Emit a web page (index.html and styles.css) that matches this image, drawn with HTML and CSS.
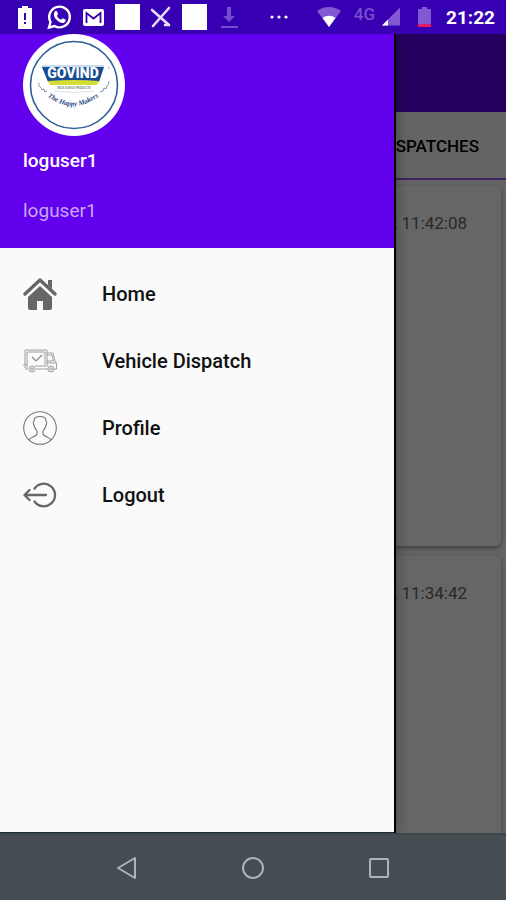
FILE: index.html
```html
<!DOCTYPE html>
<html lang="en">
<head>
    <meta charset="UTF-8" />
    <meta name="viewport" content="width=device-width, initial-scale=1" />
    <title>Dispatches</title>
    <link rel="stylesheet" href="styles.css">
</head>
<body>
    <div class="phone">
        <!-- Status bar -->
        <header class="status-bar">
            <div class="status-left">
                <svg viewBox="0 0 26 26"><path fill="#fff" d="M6 4h4V2h6v2h4v21H6z"/><path stroke="#3700b3" stroke-width="2" d="M13 9v7M13 18v2"/></svg>
                <svg viewBox="0 0 26 26"><path fill="none" stroke="#fff" stroke-width="2.4" d="M3 23.500l1.500-5.500a10.300 10.300 0 1 1 4 4z"/><path fill="#fff" d="M8.500 8c1-1.500 2-1.500 2.500-.5l1 2.300c.3.800-1.200 1.700-1 2.200 1 1.800 2.200 2.900 4 3.600.6.200 1.300-1.600 2-1.300l2.300 1.200c1 .5.300 2.200-.8 3-2 1.200-5 .2-7.500-2.200C8 13.500 7 10.500 8.500 8z"/></svg>
                <svg viewBox="0 0 26 26"><rect x="3" y="5" width="21" height="17" rx="2" fill="#fff"/><path fill="none" stroke="#3700b3" stroke-width="1.800" d="M6.500 19V9l7 5.500 7-5.500v10"/></svg>
                <svg viewBox="0 0 26 26"><path fill="#fff" d="M1 0h25v26H1z"/></svg>
                <svg viewBox="0 0 26 26"><path fill="none" stroke="#e6dcfa" stroke-width="2.600" stroke-linecap="round" d="M4 6l17 15M21 4L5 22M17 21h4"/></svg>
                <svg viewBox="0 0 26 26"><path fill="#fff" d="M0 0h25v26H0z"/></svg>
                <svg class="faded" viewBox="0 0 26 26"><path fill="#fff" d="M11 3h4v9h4l-6 6-6-6h4zM5 22h17v2H5z"/></svg>
            </div>
            <svg class="status-more" viewBox="0 0 18 6"><g fill="#fff"><circle cx="2" cy="3" r="1.600"/><circle cx="9" cy="3" r="1.600"/><circle cx="16" cy="3" r="1.600"/></g></svg>
            <div class="status-right">
                <svg class="icon-wifi" viewBox="0 0 24 22"><path fill="#8259d2" d="M0 5C7-.5 17-.5 24 5L12 21z"/><path fill="#fff" d="M5.500 12c4-3 9-3 13 0L12 21z"/></svg>
                <div class="network">
                    <span class="network-type">4G</span>
                    <svg class="icon-signal" viewBox="0 0 18 19"><path fill="#8259d2" d="M18 0v18H0z"/><path fill="#fff" d="M6 12v6H0z"/></svg>
                </div>
                <svg class="icon-battery" viewBox="0 0 20 22"><path fill="#8259d2" d="M5 3h4V1h5v2h4v18H5z"/><path fill="#e5195f" d="M5 18h13v3H5z"/></svg>
                <time class="clock">21:22</time>
            </div>
        </header>

        <main class="screen">
            <!-- Dispatch list -->
            <div class="page">
                <div class="app-bar"></div>
                <div class="tabs"><button class="tab" type="button">DISPATCHES</button></div>
                <div class="cards">
                    <article class="card"><time>2022 11:42:08</time></article>
                    <article class="card"><time>2022 11:34:42</time></article>
                </div>
            </div>
            <div class="scrim"></div>

            <!-- Navigation drawer -->
            <aside class="drawer">
                <div class="drawer-header">
                    <svg class="avatar" viewBox="0 0 102 102">
                        <circle cx="51" cy="51" r="51" fill="#fff"/>
                        <circle cx="51" cy="51" r="43.500" fill="none" stroke="#315f98" stroke-width="1.600"/>
                        <path fill="#c9dcef" d="M19 31h62v3H19z"/>
                        <path fill="#174c91" d="M19 33h62l-5 15H25z"/>
                        <path fill="#d3df35" d="M25 47q26-2 51 0l-2 4H27z"/>
                        <text class="brand" x="50" y="44" text-anchor="middle">GOVIND</text>
                        <text class="brand-sub" x="51" y="55" text-anchor="middle">MILK &amp; MILK PRODUCTS</text>
                        <path fill="none" stroke="#d5dbe2" stroke-width=".8" d="M31 57q20 3 40 0"/>
                        <path id="motto-line" fill="none" d="M17 56Q50 88 83 56"/>
                        <text class="motto"><textPath href="#motto-line" startOffset="50%" text-anchor="middle">The Happy Makers</textPath></text>
                        <path fill="none" stroke="#6f87a8" stroke-width=".9" d="M16 49q-1 3 1 4t2 3l2-1 1 3 2-1M86 47q0 4-2 5l-1 3-2-1-1 3-3 1"/>
                        <circle cx="86" cy="34" r="1" fill="none" stroke="#b9c4d0" stroke-width=".6"/>
                    </svg>
                    <p class="user-name">loguser1</p>
                    <p class="user-login">loguser1</p>
                </div>
                <nav class="menu">
                    <a class="menu-item" href="#">
                        <svg viewBox="0 0 34 34"><path fill="none" stroke="#666" stroke-width="3.400" stroke-linecap="round" stroke-linejoin="round" d="M2 17L17 3l15 14"/><path fill="#666" d="M25 3h4v9l-4-4zM17 9l12 11v11q0 2-2 2h-7v-9h-6v9H7q-2 0-2-2V20z"/></svg>
                        Home
                    </a>
                    <a class="menu-item" href="#">
                        <svg viewBox="0 0 34 34"><g fill="none" stroke="#888" stroke-width=".8"><path d="M2 21V6h22v15M4 21V8h18v13M24 9h6l2 8 1.500 2v6H31M24 11h5l1.500 6H24M0 21h5M1 23h4M2 25h3M13 25h12M12 22h13M24 19h9"/><path stroke-width="1.200" d="M9 13l4 4 6-6"/><circle cx="9" cy="25" r="3"/><circle cx="9" cy="25" r="1.200"/><circle cx="28" cy="25" r="3"/><circle cx="28" cy="25" r="1.200"/></g></svg>
                        Vehicle Dispatch
                    </a>
                    <a class="menu-item" href="#">
                        <svg viewBox="0 0 34 34"><g fill="none" stroke="#777" stroke-width="1.100"><circle cx="17" cy="17" r="16.300"/><path d="M6 29c1-3 7-3 8-6 .5-1 0-3-.5-4-1.500-1-2-3-2.500-5-1-1-.8-3 0-4C11 7 13 5.500 17 5.500S23 7 23 10c.8 1 1 3 0 4-.5 2-1 4-2.500 5-.5 1-1 3-.5 4 1 3 7 3 8 6"/></g></svg>
                        Profile
                    </a>
                    <a class="menu-item" href="#">
                        <svg viewBox="0 0 34 34"><g fill="none" stroke="#666" stroke-width="2.300" stroke-linecap="round" stroke-linejoin="round"><path d="M11.500 10.500a11.300 11.300 0 1 1 0 13M1.500 17H23M6.500 12l-5 5 5 5"/></g></svg>
                        Logout
                    </a>
                </nav>
            </aside>
        </main>

        <!-- System buttons -->
        <footer class="system-nav">
            <button type="button" aria-label="Back"><svg viewBox="0 0 24 24"><path d="M20 2v20L3 12z"/></svg></button>
            <button type="button" aria-label="Home"><svg viewBox="0 0 24 24"><circle cx="12" cy="12" r="10"/></svg></button>
            <button type="button" aria-label="Recent apps"><svg viewBox="0 0 24 24"><rect x="3" y="3" width="18" height="18" rx="1"/></svg></button>
        </footer>
    </div>
</body>
</html>
```

FILE: styles.css
```css
:root {
    --primary: #6200ee;
    --primary-dark: #3700b3;
    --surface: #fafafa;
    --system: #454d52;
}

* {
    box-sizing: border-box;
    margin: 0;
    padding: 0;
}

body {
    font-family: Roboto, sans-serif;
    background: var(--surface);
    color: #000;
}

svg {
    display: block;
    flex-shrink: 0;
}

button {
    border: none;
    background: none;
    font-family: inherit;
}

.phone {
    display: flex;
    flex-direction: column;
    height: 100vh;
    overflow: hidden;
}

/* Status bar */
.status-bar {
    display: flex;
    align-items: center;
    justify-content: space-between;
    height: 34px;
    padding: 0 11px 0 12px;
    background: var(--primary-dark);
    color: #fff;
}

.status-left {
    display: flex;
    gap: 8px;
}

.status-left svg {
    width: 26px;
    height: 26px;
}

.faded {
    opacity: 0.3;
}

.status-more {
    width: 18px;
    height: 6px;
}

.status-right {
    display: flex;
    align-items: center;
    gap: 13px;
}

.icon-wifi {
    width: 24px;
    height: 22px;
}

.network {
    display: flex;
    align-items: flex-end;
    gap: 7px;
}

.network-type {
    align-self: flex-start;
    font-size: 17px;
    line-height: 16px;
    font-weight: 500;
    color: #7a4fce;
}

.icon-signal {
    width: 18px;
    height: 22px;
}

.icon-battery {
    width: 20px;
    height: 22px;
}

.clock {
    font-size: 19px;
    font-weight: 700;
}

/* Page behind the drawer */
.screen {
    position: relative;
    flex: 1;
    min-height: 0;
    overflow: hidden;
}

.app-bar {
    height: 78px;
    background: var(--primary);
}

.tabs {
    display: flex;
    justify-content: flex-end;
    height: 68px;
    padding: 2px 27px 0 0;
    border-bottom: 2px solid #a35cf5;
}

.tab {
    font-size: 17px;
    font-weight: 500;
}

.cards {
    display: flex;
    flex-direction: column;
    gap: 10px;
    padding: 6px 5px;
}

.card {
    height: 360px;
    padding: 26px 34px;
    border-radius: 6px;
    background: #fff;
    box-shadow: 0 2px 5px rgba(0, 0, 0, 0.4);
    color: #666;
    font-size: 17px;
    line-height: 22px;
    text-align: right;
}

.scrim {
    position: absolute;
    inset: 0;
    background: rgba(0, 0, 0, 0.6);
}

/* Drawer */
.drawer {
    position: absolute;
    top: 0;
    right: 112px;
    bottom: 0;
    left: 0;
    background: var(--surface);
    border-bottom: 1px solid #18302e;
    box-shadow: 2px 0 0 #000, 3px 0 12px rgba(0, 0, 0, 0.3);
}

.drawer-header {
    height: 214px;
    padding-left: 23px;
    background: var(--primary);
    color: #fff;
    font-size: 19px;
    line-height: 24px;
}

.avatar {
    width: 102px;
    height: 102px;
}

.brand {
    font: 900 14px Roboto, sans-serif;
    fill: #fff;
}

.brand-sub {
    font: 700 3px Roboto, sans-serif;
    fill: #78947b;
}

.motto {
    font: italic 700 7px "Liberation Serif", serif;
    fill: #23477c;
}

.user-name {
    margin-top: 13px;
    font-weight: 500;
}

.user-login {
    margin-top: 26px;
    color: #c8a6f9;
}

.menu {
    padding-top: 12px;
}

.menu-item {
    display: flex;
    align-items: center;
    gap: 45px;
    height: 67px;
    padding-left: 23px;
    color: #111;
    font-size: 20px;
    font-weight: 500;
    text-decoration: none;
}

.menu-item svg {
    width: 34px;
    height: 34px;
}

/* System buttons */
.system-nav {
    display: flex;
    align-items: center;
    justify-content: center;
    gap: 102px;
    height: 67px;
    border-top: 2px solid #3d4749;
    background: var(--system);
}

.system-nav svg {
    width: 24px;
    height: 24px;
    fill: none;
    stroke: #aeb4b5;
    stroke-width: 2px;
    stroke-linejoin: round;
}
```
